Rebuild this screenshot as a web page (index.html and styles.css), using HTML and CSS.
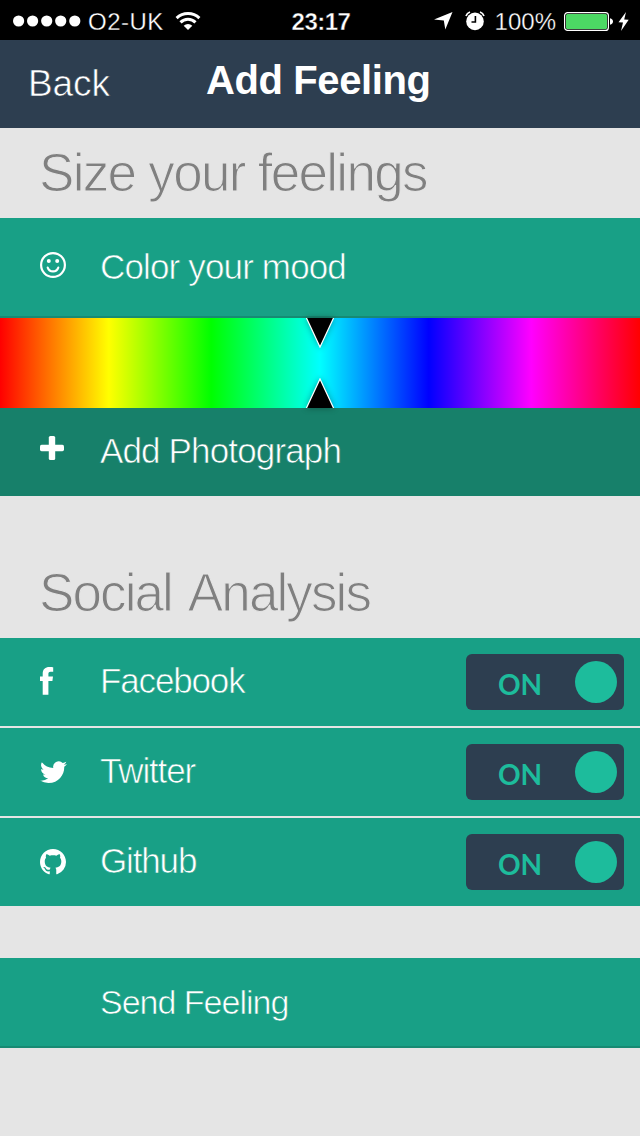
FILE: index.html
```html
<!DOCTYPE html>
<html lang="en">
<head>
<meta charset="utf-8">
<title>Add Feeling</title>
<link rel="stylesheet" href="styles.css">
</head>
<body>
<div class="status">
  <div class="status-left">
    <svg width="68" height="12" viewBox="0 0 68 12" fill="#fff"><circle cx="5.6" cy="6" r="5.6"/><circle cx="19.6" cy="6" r="5.6"/><circle cx="33.7" cy="6" r="5.6"/><circle cx="47.7" cy="6" r="5.6"/><circle cx="61.8" cy="6" r="5.6"/></svg>
    <span class="carrier">O2-UK</span>
    <svg class="wifi" width="26" height="20" viewBox="0 0 26 20" fill="none" stroke="#fff" stroke-width="3"><path d="M1.6 7.1A16.4 16.4 0 0 1 24.4 7.1"/><path d="M5.5 11.4A10.7 10.7 0 0 1 20.5 11.4"/><path d="M13 19L8.7 14.7A6.2 6.2 0 0 1 17.3 14.7Z" fill="#fff" stroke="none"/></svg>
  </div>
  <span class="clock">23:17</span>
  <div class="status-right">
    <svg width="19" height="18" viewBox="0 0 19 18" fill="#fff"><path d="M18.5 0L11.3 17.5L9.8 8.5L0 7.6Z"/></svg>
    <svg class="alarm" width="20" height="20" viewBox="0 0 20 20"><circle cx="10" cy="10.4" r="8.8" fill="#fff"/><path d="M1 5Q2 2 5 1M15 1Q18 2 19 5" fill="none" stroke="#fff" stroke-width="1.7"/><path d="M10.4 5V11H6.5" fill="none" stroke="#000" stroke-width="1.6"/></svg>
    <span class="percent">100%</span>
    <svg class="battery" width="50" height="19" viewBox="0 0 50 19"><rect x=".6" y=".6" width="43.8" height="17.8" rx="3" fill="#000" stroke="#fff" stroke-width="1.2"/><rect x="2" y="2" width="41" height="15" rx="1.5" fill="#4cd964"/><path d="M46 6.3C50 7 50 12 46 12.7Z" fill="#fff"/></svg>
    <svg class="bolt" width="11" height="19" viewBox="0 0 11 19" fill="#fff"><path d="M8 0L.5 10.2L5 10.5L3 19L10.7 7.7L6.2 7.4Z"/></svg>
  </div>
</div>
<header class="navbar">
  <a class="back">Back</a>
  <h1 class="title">Add Feeling</h1>
</header>
<main>
  <h2 class="heading">Size your feelings</h2>
  <div class="row row-tall">
    <svg class="icon" width="26" height="26" viewBox="0 0 26 26" fill="none" stroke="#fff"><circle cx="13" cy="13" r="11.9" stroke-width="2.2"/><circle cx="8.8" cy="9" r="2" fill="#fff" stroke="none"/><circle cx="17.2" cy="9" r="2" fill="#fff" stroke="none"/><path d="M7.7 15.6A5.6 5.6 0 0 0 18.3 15.6" stroke-width="2.1" stroke-linecap="round"/></svg>
    <span class="label mood">Color your mood</span>
  </div>
  <div class="spectrum">
    <svg class="marker" width="28" height="30" viewBox="0 0 28 30"><path d="M0 -1L14 29L28 -1Z" fill="#000" stroke="#fff" stroke-width="1.2"/></svg>
    <svg class="marker" width="28" height="30" viewBox="0 0 28 30"><path d="M0 31L14 1L28 31Z" fill="#000" stroke="#fff" stroke-width="1.2"/></svg>
  </div>
  <div class="row row-photo">
    <svg class="icon plus" width="24" height="24" viewBox="0 0 24 24" fill="#fff"><rect x="8.8" y="0" width="6.4" height="24" rx="1.6"/><rect x="0" y="8.8" width="24" height="6.4" rx="1.6"/></svg>
    <span class="label photo">Add Photograph</span>
  </div>
  <h2 class="heading social">Social Analysis</h2>
  <div class="list">
    <div class="row">
      <svg class="icon facebook" width="14" height="28" viewBox="0 0 14 28" fill="#fff"><path d="M13.2.3V4.8H10.6C8.6 4.8 8.4 5.8 8.4 7.2V9.4H13L12.4 14H8.4V27.8H2.7V14H0V9.4H2.7V6.5C2.7 2.3 5.4 0 9.3 0C11 0 12.6.1 13.2.3Z"/></svg>
      <span class="label fb">Facebook</span>
      <div class="switch"><span class="on">ON</span><span class="knob"></span></div>
    </div>
    <div class="row">
      <svg class="icon twitter" width="27" height="22" viewBox="0 1.4 16 13.2" preserveAspectRatio="none" fill="#fff"><path d="M5.026 14.6c6.038 0 9.341-5.003 9.341-9.334 0-.14 0-.282-.006-.422A6.685 6.685 0 0 0 16 3.142a6.658 6.658 0 0 1-1.889.518 3.301 3.301 0 0 0 1.447-1.817 6.533 6.533 0 0 1-2.087.793A3.286 3.286 0 0 0 7.875 5.63 9.325 9.325 0 0 1 1.114 2.1 3.323 3.323 0 0 0 2.13 6.574 3.203 3.203 0 0 1 .64 6.165v.045a3.288 3.288 0 0 0 2.632 3.218 3.203 3.203 0 0 1-.865.115 3.23 3.23 0 0 1-.614-.057 3.283 3.283 0 0 0 3.067 2.277A6.588 6.588 0 0 1 .78 13.18a6.32 6.32 0 0 1-.78-.045A9.344 9.344 0 0 0 5.026 14.6Z"/></svg>
      <span class="label tw">Twitter</span>
      <div class="switch"><span class="on">ON</span><span class="knob"></span></div>
    </div>
    <div class="row">
      <svg class="icon github" width="26" height="26" viewBox="0 0 16 16" fill="#fff"><path d="M8 0C3.58 0 0 3.58 0 8c0 3.54 2.29 6.53 5.47 7.59.4.07.55-.17.55-.38 0-.19-.01-.82-.01-1.49-2.01.37-2.53-.49-2.69-.94-.09-.23-.48-.94-.82-1.13-.28-.15-.68-.52-.01-.53.63-.01 1.08.58 1.23.82.72 1.21 1.87.87 2.33.66.07-.52.28-.87.51-1.07-1.78-.2-3.64-.89-3.64-3.95 0-.87.31-1.59.82-2.15-.08-.2-.36-1.02.08-2.12 0 0 .67-.21 2.2.82.64-.18 1.32-.27 2-.27s1.36.09 2 .27c1.53-1.04 2.2-.82 2.2-.82.44 1.1.16 1.92.08 2.12.51.56.82 1.27.82 2.15 0 3.07-1.87 3.75-3.65 3.95.29.25.54.73.54 1.48 0 1.07-.01 1.93-.01 2.2 0 .21.15.46.55.38A8.01 8.01 0 0 0 16 8c0-4.42-3.58-8-8-8Z"/></svg>
      <span class="label gh">Github</span>
      <div class="switch"><span class="on">ON</span><span class="knob"></span></div>
    </div>
  </div>
  <div class="row row-send"><span class="label send">Send Feeling</span></div>
</main>
</body>
</html>
```
FILE: styles.css
```css
* { box-sizing: border-box; }
body { margin: 0; width: 640px; min-height: 1136px; background: #e5e5e5; font-family: "Liberation Sans", Arial, sans-serif; color: #fff; }
svg { display: block; flex: none; }
h1, h2 { margin: 0; font-weight: 400; }
span, a, h1, h2 { white-space: nowrap; }

.status { height: 40px; background: #000; display: grid; grid-template-columns: 1fr auto 1fr; align-items: center; padding: 1px 11px 0 13px; font-size: 24px; line-height: 39px; }
.status-left, .status-right { display: flex; align-items: center; height: 39px; }
.status-right { justify-content: flex-end; }
.carrier, .percent { -webkit-text-stroke: 0.3px #000; padding-top: 1px; }
.carrier { margin-left: 7px; letter-spacing: 0.5px; }
.wifi { margin: -1px 0 0 11px; }
.clock { font-weight: 700; letter-spacing: -0.5px; padding-top: 1px; -webkit-text-stroke: 0.4px #000; }
.alarm { margin-left: 12px; }
.percent { margin-left: 10px; }
.battery { margin-left: 8px; }
.bolt { margin-left: 4px; }

/* A stroke in the surface colour thins the letterforms to a light weight. */
.navbar { height: 88px; background: #2d3e50; display: grid; grid-template-columns: 178px 1fr; padding-left: 28px; }
.back { font-size: 37px; line-height: 88px; letter-spacing: -0.1px; -webkit-text-stroke: 0.6px #2d3e50; }
.title { font-size: 40px; font-weight: 700; line-height: 80px; letter-spacing: -0.4px; }

.heading { height: 90px; padding-left: 39px; font-size: 53px; line-height: 89px; letter-spacing: -1.7px; color: #808080; -webkit-text-stroke: 1.1px #e5e5e5; }
.social { margin-top: 52px; letter-spacing: -1.9px; word-spacing: 6px; }

.row { height: 88px; background: #18a086; display: flex; align-items: center; padding: 0 16px 0 40px; }
.row-tall { height: 100px; border-bottom: 2px solid #178a73; }
.row-photo { background: #17806a; }
.row-send { height: 90px; margin-top: 52px; border-bottom: 2px solid #178a73; }
.icon { margin-top: -4px; }
.plus { margin-top: -8px; }
.facebook { margin-top: -2px; }
.twitter { margin-top: -1px; }
.github { margin-top: -1px; }
.label { font-size: 35px; line-height: 40px; letter-spacing: -0.85px; -webkit-text-stroke: 0.65px #18a086; }
.row-photo .label { -webkit-text-stroke-color: #17806a; margin-top: -2px; }
.list .label { letter-spacing: -1.15px; margin-top: -2px; }
.row-send .label { font-size: 34px; letter-spacing: -1px; }
.mood { margin-left: 34px; }
.photo { margin-left: 36px; }
.fb { margin-left: 46px; }
.tw { margin-left: 33px; }
.gh { margin-left: 34px; }
.send { margin-left: 60px; }

.list { display: flex; flex-direction: column; gap: 2px; }
.switch { margin-left: auto; width: 158px; height: 56px; border-radius: 6px; background: #2d3e50; display: flex; align-items: center; justify-content: space-between; padding: 0 7px 0 32px; }
.on { color: #1dbc9c; font-family: Lato, sans-serif; font-weight: 700; font-size: 28px; line-height: 56px; padding-top: 3px; }
.knob { width: 42px; height: 42px; border-radius: 50%; background: #1dbc9c; }

.spectrum { height: 90px; display: flex; flex-direction: column; align-items: center; justify-content: space-between; background: linear-gradient(90deg, #f00 0%, #ff0 17%, #0f0 33%, #0ff 50%, #00f 67%, #f0f 83%, #f00 100%); }
.marker { filter: drop-shadow(0 0 3px rgba(0, 0, 0, 0.35)); }
```
